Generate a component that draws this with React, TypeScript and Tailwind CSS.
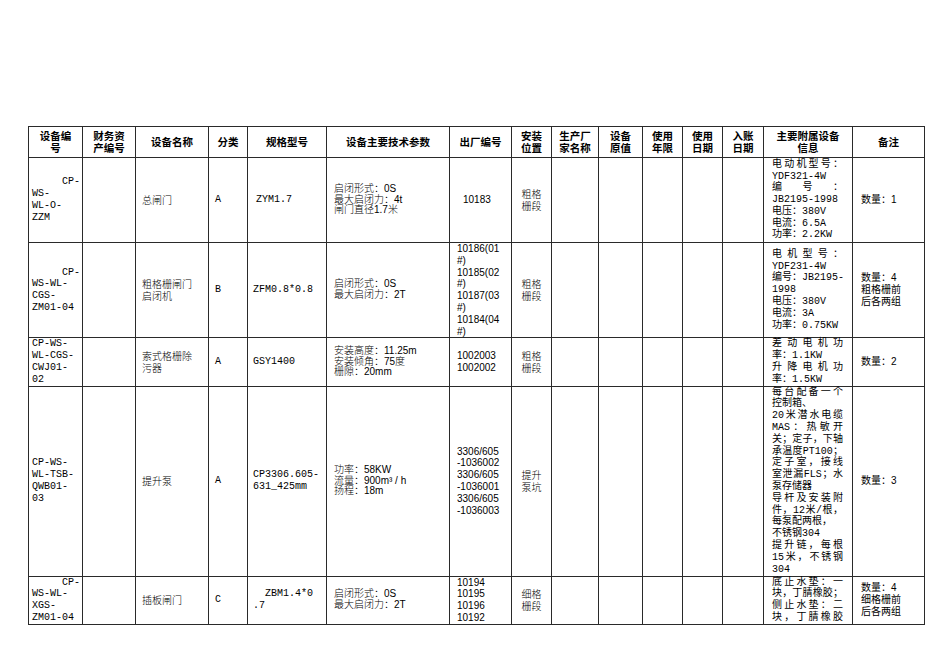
import React from "react";

type Line = string | { t: string; j?: boolean; r?: boolean; i?: boolean };

function tokens(s: string): string[] {
  return s.match(/[\x21-\x7E³]+|[^\x21-\x7E³\s]/g) || [];
}

function Lines({ lines, center }: { lines: Line[]; center?: boolean }) {
  return (
    <div className={center ? "flex flex-col items-center" : "flex flex-col"}>
      {lines.map((ln, k) => {
        const o = typeof ln === "string" ? { t: ln } : ln;
        if (o.j) {
          return (
            <div key={k} className="flex justify-between whitespace-nowrap">
              {tokens(o.t).map((tk, m) => (
                <span key={m}>{tk}</span>
              ))}
            </div>
          );
        }
        return (
          <div
            key={k}
            className={
              o.r
                ? "whitespace-nowrap text-right"
                : o.i
                ? "whitespace-nowrap pl-[3px]"
                : "whitespace-nowrap"
            }
          >
            {o.t}
          </div>
        );
      })}
    </div>
  );
}

type Row = {
  h: string;
  c1: Line[];
  c3: Line[];
  c4: string;
  c5: Line[];
  c6: Line[];
  c7: Line[];
  c7c?: boolean;
  c8: Line[];
  c14: Line[];
  c15: Line[];
};

const rows: Row[] = [
  {
    h: "h-[85px]",
    c1: [{ t: "CP-", r: true }, "WS-", "WL-O-", "ZZM"],
    c3: ["总闸门"],
    c4: "A",
    c5: [{ t: "ZYM1.7", i: true }],
    c6: ["启闭形式：0S", "最大启闭力：4t", "闸门直径1.7米"],
    c7: ["10183"],
    c7c: true,
    c8: ["粗格", "栅段"],
    c14: [
      { t: "电动机型号：", j: true },
      "YDF321-4W",
      { t: "编号：", j: true },
      "JB2195-1998",
      "电压：380V",
      "电流：6.5A",
      "功率：2.2KW",
    ],
    c15: ["数量：1"],
  },
  {
    h: "h-[95px]",
    c1: [{ t: "CP-", r: true }, "WS-WL-", "CGS-", "ZM01-04"],
    c3: ["粗格栅闸门", "启闭机"],
    c4: "B",
    c5: ["ZFM0.8*0.8"],
    c6: ["启闭形式：0S", "最大启闭力：2T"],
    c7: ["10186(01", "#)", "10185(02", "#)", "10187(03", "#)", "10184(04", "#)"],
    c8: ["粗格", "栅段"],
    c14: [
      { t: "电机型号：", j: true },
      "YDF231-4W",
      { t: "编号：JB2195-", j: true },
      "1998",
      "电压：380V",
      "电流：3A",
      "功率：0.75KW",
    ],
    c15: ["数量：4", "粗格栅前", "后各两组"],
  },
  {
    h: "h-[48px]",
    c1: ["CP-WS-", "WL-CGS-", "CWJ01-", "02"],
    c3: ["索式格栅除", "污器"],
    c4: "A",
    c5: ["GSY1400"],
    c6: ["安装高度：11.25m", "安装倾角：75度", "栅隙：20mm"],
    c7: ["1002003", "1002002"],
    c8: ["粗格", "栅段"],
    c14: [
      { t: "差动电机功", j: true },
      "率：1.1KW",
      { t: "升降电机功", j: true },
      "率：1.5KW",
    ],
    c15: ["数量：2"],
  },
  {
    h: "h-[190px]",
    c1: ["CP-WS-", "WL-TSB-", "QWB01-", "03"],
    c3: ["提升泵"],
    c4: "A",
    c5: ["CP3306.605-", "631_425mm"],
    c6: ["功率：58KW", "流量：900m³ / h", "扬程：18m"],
    c7: ["3306/605", "-1036002", "3306/605", "-1036001", "3306/605", "-1036003"],
    c8: ["提升", "泵坑"],
    c14: [
      { t: "每台配备一个", j: true },
      "控制箱、",
      { t: "20米潜水电缆", j: true },
      { t: "MAS：热敏开", j: true },
      { t: "关；定子，下轴", j: true },
      { t: "承温度PT100；", j: true },
      { t: "定子室，接线", j: true },
      { t: "室泄漏FLS；水", j: true },
      "泵存储器",
      { t: "导杆及安装附", j: true },
      { t: "件，12米/根，", j: true },
      "每泵配两根，",
      "不锈钢304",
      { t: "提升链，每根", j: true },
      { t: "15米，不锈钢", j: true },
      "304",
    ],
    c15: ["数量：3"],
  },
  {
    h: "h-[48px]",
    c1: [{ t: "CP-", r: true }, "WS-WL-", "XGS-", "ZM01-04"],
    c3: ["插板闸门"],
    c4: "C",
    c5: [{ t: "ZBM1.4*0", r: true }, ".7"],
    c6: ["启闭形式：0S", "最大启闭力：2T"],
    c7: ["10194", "10195", "10196", "10192"],
    c8: ["细格", "栅段"],
    c14: [
      { t: "底止水垫：一", j: true },
      { t: "块，丁腈橡胶；", j: true },
      { t: "侧止水垫：二", j: true },
      { t: "块，丁腈橡胶", j: true },
    ],
    c15: ["数量：4", "细格栅前", "后各两组"],
  },
];

const headers: string[][] = [
  ["设备编", "号"],
  ["财务资", "产编号"],
  ["设备名称"],
  ["分类"],
  ["规格型号"],
  ["设备主要技术参数"],
  ["出厂编号"],
  ["安装", "位置"],
  ["生产厂", "家名称"],
  ["设备", "原值"],
  ["使用", "年限"],
  ["使用", "日期"],
  ["入账", "日期"],
  ["主要附属设备", "信息"],
  ["备注"],
];

const td = "border border-[#2a2a2a] p-0 align-middle";

export default function App() {
  return (
    <div className="w-[950px] min-h-[672px] bg-white">
      <div className="pt-[126px] pl-[28px]">
        <table className="w-[897px] table-fixed border-collapse text-black">
          <colgroup>
            <col className="w-[54px]" />
            <col className="w-[53px]" />
            <col className="w-[73px]" />
            <col className="w-[39px]" />
            <col className="w-[79px]" />
            <col className="w-[123px]" />
            <col className="w-[62px]" />
            <col className="w-[40px]" />
            <col className="w-[47px]" />
            <col className="w-[44px]" />
            <col className="w-[40px]" />
            <col className="w-[40px]" />
            <col className="w-[41px]" />
            <col className="w-[89px]" />
            <col className="w-[72px]" />
          </colgroup>
          <thead>
            <tr className="h-[31px]">
              {headers.map((h, k) => (
                <th
                  key={k}
                  className={`${td} text-center font-['Noto_Sans_CJK_SC',sans-serif] text-[10.5px] font-bold leading-[12px]`}
                >
                  {h.map((l, m) => (
                    <div key={m} className="whitespace-nowrap">
                      {l}
                    </div>
                  ))}
                </th>
              ))}
            </tr>
          </thead>
          <tbody className="text-[10px] leading-[11.8px]">
            {rows.map((r, k) => (
              <tr key={k} className={r.h}>
                <td className={`${td} pl-[3px] pr-[2px] font-['Liberation_Mono','Noto_Sans_CJK_SC',monospace]`}>
                  <Lines lines={r.c1} />
                </td>
                <td className={td}></td>
                <td className={`${td} pl-[6px] font-['Noto_Sans_CJK_SC',sans-serif] font-light`}>
                  <Lines lines={r.c3} />
                </td>
                <td className={`${td} pl-[6px] font-['Liberation_Mono',monospace]`}>{r.c4}</td>
                <td className={`${td} pl-[5px] pr-[13px] font-['Liberation_Mono','Noto_Sans_CJK_SC',monospace]`}>
                  <Lines lines={r.c5} />
                </td>
                <td className={`${td} pl-[7px] font-['Liberation_Sans','Noto_Sans_CJK_SC',sans-serif] font-light leading-[10.8px]`}>
                  <Lines lines={r.c6} />
                </td>
                <td className={`${td} pl-[7px] font-['Liberation_Sans',sans-serif]`}>
                  {r.c7c ? (
                    <div className="pl-[6px]">
                      <Lines lines={r.c7} />
                    </div>
                  ) : (
                    <Lines lines={r.c7} />
                  )}
                </td>
                <td className={`${td} font-['Noto_Sans_CJK_SC',sans-serif] font-light`}>
                  <Lines lines={r.c8} center />
                </td>
                <td className={td}></td>
                <td className={td}></td>
                <td className={td}></td>
                <td className={td}></td>
                <td className={td}></td>
                <td className={`${td} pl-[8px] pr-[9px] font-['Liberation_Mono','Noto_Sans_CJK_SC',monospace]`}>
                  <Lines lines={r.c14} />
                </td>
                <td className={`${td} pl-[8px] font-['Liberation_Sans','Noto_Sans_CJK_SC',sans-serif]`}>
                  <Lines lines={r.c15} />
                </td>
              </tr>
            ))}
          </tbody>
        </table>
      </div>
    </div>
  );
}
